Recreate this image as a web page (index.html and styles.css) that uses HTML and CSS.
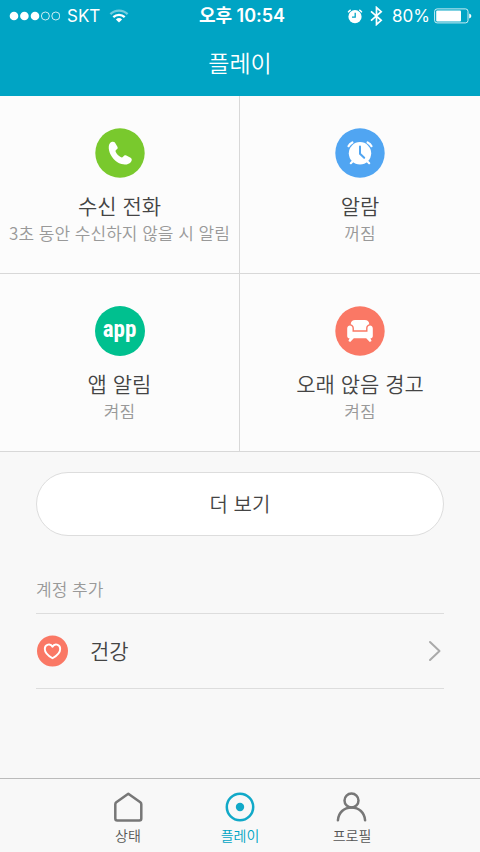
FILE: index.html
```html
<!DOCTYPE html>
<html lang="ko">
<head>
<meta charset="utf-8">
<meta name="viewport" content="width=device-width, initial-scale=1">
<title>플레이</title>
<link rel="stylesheet" href="styles.css">
</head>
<body>
<header class="header">
  <div class="status">
    <div class="status-side">
      <svg class="signal" width="52" height="12" viewBox="0 0 52 12" aria-hidden="true">
        <g fill="#fff"><circle cx="6" cy="6" r="4.3"/><circle cx="16.4" cy="6" r="4.3"/><circle cx="27" cy="6" r="4.3"/></g>
        <g fill="none" stroke="#fff" stroke-width=".8"><circle cx="37.4" cy="6" r="4"/><circle cx="47.8" cy="6" r="4"/></g>
      </svg>
      <span>SKT</span>
      <svg class="wifi" width="20" height="14" viewBox="0 0 20 14" aria-hidden="true">
        <g fill="none" stroke="#fff" stroke-width="2.3"><path d="M1.4 5.1a12.4 12.4 0 0 1 17.2 0" opacity=".45"/><path d="M4.3 8.2a8.3 8.3 0 0 1 11.4 0"/></g>
        <path d="M6.9 10.4a4.6 4.6 0 0 1 6.2 0L10 13.6z" fill="#fff"/>
      </svg>
    </div>
    <time class="clock">오후 10:54</time>
    <div class="status-side status-end">
      <svg width="16" height="16" viewBox="0 0 16 16" aria-hidden="true">
        <circle cx="8" cy="8.7" r="6.6" fill="#fff"/>
        <path d="M1.2 4.3a6 6 0 0 1 2.5-2.5M14.8 4.3a6 6 0 0 0-2.5-2.5" fill="none" stroke="#fff" stroke-width="1.5"/>
        <path d="M8.2 4.8v4.3H5" fill="none" stroke="#00a4c4" stroke-width="1.3"/>
      </svg>
      <svg class="bluetooth" width="13" height="20" viewBox="0 0 13 20" aria-hidden="true">
        <path d="M1 5.3l10.2 9-4.7 4.2v-17l4.7 4.2L1 14.7" fill="none" stroke="#fff" stroke-width="1.7"/>
      </svg>
      <span>80%</span>
      <svg class="battery" width="38" height="16" viewBox="0 0 38 16" aria-hidden="true">
        <rect x=".6" y=".9" width="33.4" height="14" rx="2.5" fill="none" stroke="#fff" stroke-opacity=".8" stroke-width="1"/>
        <rect x="2.2" y="2.4" width="24.8" height="11" rx="1" fill="#fff"/>
        <path d="M35.2 5.4q2.2.7 2.2 2.5t-2.2 2.5z" fill="#fff"/>
      </svg>
    </div>
  </div>
  <h1 class="title">플레이</h1>
</header>

<main class="content">
  <section class="grid">
    <a class="card" href="#call">
      <svg class="card-icon" viewBox="0 0 50 50" aria-hidden="true">
        <circle cx="25" cy="25" r="24.7" fill="#79c92d"/>
        <path d="M15.2 14.800c1.200-1.300 3.700-1.600 4.700-.3l2.500 4.200c.6 1.200.2 2.200-.8 2.900-1.100.8-1.300 1.600-.7 2.700 1.100 2.100 2.600 3.600 4.700 4.800 1.100.6 1.900.4 2.700-.7.8-1.100 1.900-1.500 3-.9l4.300 2.200c1.400.8 1.500 2.400.6 3.800-1.800 3-6 3.700-9.700 2.600-6.300-1.900-11.100-7.800-12.400-13.600-.7-3.100-.4-5.900 1.100-7.700z" fill="#fff"/>
      </svg>
      <h2 class="card-title">수신 전화</h2>
      <p class="card-note">3초 동안 수신하지 않을 시 알림</p>
    </a>
    <a class="card" href="#alarm">
      <svg class="card-icon" viewBox="0 0 50 50" aria-hidden="true">
        <circle cx="25" cy="25" r="24.7" fill="#50a5f2"/>
        <circle cx="25" cy="25.3" r="11.2" fill="#fff"/>
        <g fill="none" stroke="#fff" stroke-width="2.2" stroke-linecap="round"><path d="M13.500 18.200q1.200-2.500 3.900-3.800M36.500 18.200q-1.200-2.500-3.900-3.800M18 33l-2.200 2.200M32 33l2.200 2.200"/></g>
        <path d="M25 18.500v7.300l4.200 4" fill="none" stroke="#50a5f2" stroke-width="2" stroke-linecap="round"/>
      </svg>
      <h2 class="card-title">알람</h2>
      <p class="card-note">꺼짐</p>
    </a>
    <a class="card" href="#apps">
      <span class="card-icon app-icon">app</span>
      <h2 class="card-title">앱 알림</h2>
      <p class="card-note">켜짐</p>
    </a>
    <a class="card" href="#idle">
      <svg class="card-icon" viewBox="0 0 50 50" aria-hidden="true">
        <circle cx="25" cy="25" r="24.7" fill="#fa7865"/>
        <g fill="#fff">
          <path d="M15.700 18.300c.3-3 1.800-4.300 4.500-4.300h9.600c2.700 0 4.200 1.300 4.500 4.300-2 .6-3.200 2-3.200 3.900v2H18.900v-2c0-1.900-1.200-3.300-3.200-3.900z"/>
          <path d="M12.200 22.500c0-4 5.300-4 5.300-.2v3.500h15v-3.500c0-3.800 5.300-3.800 5.300.2v7.500c0 1.600-1 2.300-2.400 2.300l1.200 2.700-1.800 1-3.600-3.700H18.800L15.200 36l-1.800-1 1.200-2.700c-1.400 0-2.400-.7-2.400-2.300z"/>
        </g>
      </svg>
      <h2 class="card-title">오래 앉음 경고</h2>
      <p class="card-note">켜짐</p>
    </a>
  </section>

  <section class="more">
    <button class="more-button" type="button">더 보기</button>
  </section>

  <section class="accounts">
    <h2 class="accounts-title">계정 추가</h2>
    <a class="account" href="#health">
      <svg width="32" height="32" viewBox="0 0 32 32" aria-hidden="true">
        <circle cx="16.5" cy="16" r="15.5" fill="#fa7865"/>
        <path d="M16.500 23.300c-4-2.300-7.700-5.800-7.700-9.300 0-4.900 5.800-5.800 7.700-2.300 1.900-3.500 7.700-2.600 7.700 2.300 0 3.500-3.700 7-7.700 9.300z" fill="none" stroke="#fff" stroke-width="1.900" stroke-linejoin="round"/>
      </svg>
      <span class="account-name">건강</span>
      <svg width="16" height="22" viewBox="0 0 16 22" aria-hidden="true">
        <path d="M2 2l9.500 9L2 20" fill="none" stroke="#aaa" stroke-width="2" stroke-linecap="round" stroke-linejoin="round"/>
      </svg>
    </a>
  </section>
</main>

<nav class="tabs">
  <a class="tab" href="#status">
    <svg width="32" height="32" viewBox="0 0 32 32" aria-hidden="true"><path d="M16.300 2.700l12 8.600q1 .8 1 2v14.200q0 2-2 2h-22q-2 0-2-2V13.300q0-1.200 1-2z" fill="none" stroke="#777" stroke-width="2.500" stroke-linejoin="round"/></svg>
    <span>상태</span>
  </a>
  <a class="tab tab-active" href="#play" aria-current="page">
    <svg width="32" height="32" viewBox="0 0 32 32" aria-hidden="true"><circle cx="16" cy="16" r="13.200" fill="none" stroke="#11a9c8" stroke-width="2.500"/><circle cx="16" cy="16" r="4.200" fill="#11a9c8"/></svg>
    <span>플레이</span>
  </a>
  <a class="tab" href="#profile">
    <svg width="32" height="32" viewBox="0 0 32 32" aria-hidden="true"><g fill="none" stroke="#777" stroke-width="2.500" stroke-linecap="round"><circle cx="15.500" cy="9.500" r="7"/><path d="M1.900 29.300C2.500 21.500 8 16.500 15.500 16.500S28.500 21.500 29.100 29.300"/></g></svg>
    <span>프로필</span>
  </a>
</nav>
</body>
</html>
```
FILE: styles.css
```css
* { box-sizing: border-box; }

body {
  margin: 0;
  min-height: 100vh;
  display: flex;
  flex-direction: column;
  background: #f8f8f8;
  color: #444;
  font-family: "Noto Sans CJK KR", sans-serif;
  font-weight: 350;
}

h1, h2, p { margin: 0; font-weight: 350; }
a { color: inherit; text-decoration: none; }
svg { display: block; flex: none; }

.header {
  background: #00a4c4;
  color: #fff;
  padding-bottom: 18px;
}

.status {
  display: grid;
  grid-template-columns: 1fr auto 1fr;
  align-items: center;
  height: 32px;
  padding: 0 8px;
  font-family: Inter, "Noto Sans CJK KR", sans-serif;
  font-size: 17px;
  font-weight: 400;
}

.status-side { display: flex; align-items: center; }
.status-end { justify-content: flex-end; }
.signal { margin-right: 7px; }
.wifi { margin-left: 9px; }
.clock { padding-left: 4px; font-size: 18px; font-weight: 600; line-height: 24px; }
.bluetooth { margin: 0 9px 0 7px; }
.battery { margin-left: 4px; }

.title {
  font-size: 23px;
  line-height: 32px;
  padding-top: 14px;
  text-align: center;
}

.content { flex: 1; }

.grid {
  display: grid;
  grid-template-columns: 1fr 1fr;
  background: #fcfcfc;
}

.card {
  display: flex;
  flex-direction: column;
  align-items: center;
  padding: 32px 8px 26px;
  border-bottom: 1px solid #d8d8d8;
  text-align: center;
}

.card:nth-child(odd) { border-right: 1px solid #d8d8d8; }

.card-icon { width: 50px; height: 50px; }

.app-icon {
  display: flex;
  align-items: center;
  justify-content: center;
  padding-bottom: 2px;
  border-radius: 50%;
  background: #00c08f;
  color: #fff;
  font-family: "Roboto Condensed", "Liberation Sans Narrow", "Liberation Sans", sans-serif;
  font-size: 23px;
  font-weight: 700;
  line-height: 24px;
}

.card-title { margin-top: 13px; font-size: 21px; line-height: 28px; }
.card-note { color: #999; font-size: 17px; line-height: 28px; }

.more { padding: 20px 36px 36px; }

.more-button {
  display: block;
  width: 100%;
  height: 64px;
  padding: 0 0 2px;
  border: 1px solid #ddd;
  border-radius: 32px;
  background: #fff;
  color: inherit;
  font: inherit;
  font-size: 20px;
}

.accounts { padding: 0 36px; }

.accounts-title {
  padding: 3px 0 10px;
  border-bottom: 1px solid #ddd;
  color: #999;
  font-size: 17px;
  line-height: 28px;
}

.account {
  display: flex;
  align-items: center;
  height: 75px;
  border-bottom: 1px solid #ddd;
  font-size: 21px;
}

.account-name { flex: 1; margin-left: 22px; padding-bottom: 2px; }

.tabs {
  display: flex;
  justify-content: center;
  border-top: 1px solid #bbb;
  padding: 12px 72px 5px;
  color: #555;
  font-size: 14px;
  line-height: 24px;
}

.tab {
  flex: 1;
  display: flex;
  flex-direction: column;
  align-items: center;
}

.tab-active { color: #00a4c4; }
```
